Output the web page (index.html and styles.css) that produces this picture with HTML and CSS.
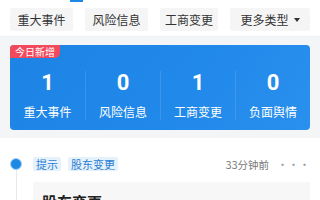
FILE: index.html
```html
<!DOCTYPE html>
<html lang="zh">
<head>
<meta charset="utf-8">
<link rel="stylesheet" href="styles.css">
</head>
<body>
<div class="top">
  <div class="indicator"></div>
  <div class="tabs">
    <div class="tab w63">重大事件</div>
    <div class="tab w63">风险信息</div>
    <div class="tab w58">工商变更</div>
    <div class="tab more">更多类型<span class="caret"></span></div>
  </div>
</div>
<div class="summary">
  <div class="card">
    <div class="badge">今日新增</div>
    <div class="stats">
      <div class="stat"><div class="num">1</div><div class="lbl">重大事件</div></div>
      <div class="stat"><div class="num">0</div><div class="lbl">风险信息</div></div>
      <div class="stat"><div class="num">1</div><div class="lbl">工商变更</div></div>
      <div class="stat"><div class="num">0</div><div class="lbl">负面舆情</div></div>
    </div>
  </div>
</div>
<div class="feed">
  <div class="item">
    <div class="rail"><div class="dot"></div><div class="line"></div></div>
    <div class="content">
      <div class="head">
        <span class="chip">提示</span>
        <span class="chip">股东变更</span>
        <span class="time">33分钟前</span>
        <span class="dots">···</span>
      </div>
      <div class="box">
        <div class="box-title">股东变更</div>
      </div>
    </div>
  </div>
</div>
</body>
</html>
```
FILE: styles.css
```css
* { box-sizing: border-box; }
html, body { margin: 0; padding: 0; background: #fff; }
body {
  width: 320px;
  height: 200px;
  overflow: hidden;
  font-family: "Noto Sans CJK SC", "Noto Sans", sans-serif;
  color: #333;
}
.top {
  background: #fff;
  height: 37px;
  border-bottom: 1px solid #eef0f2;
}
.indicator {
  width: 13px;
  height: 2px;
  margin-left: 70px;
  background: #1e88e5;
}
.tabs {
  display: flex;
  justify-content: space-between;
  padding: 6px 10px 0;
}
.tab {
  height: 23px;
  line-height: 23px;
  font-size: 12px;
  color: #333;
  background: #f5f5f6;
  border-radius: 2px;
  text-align: center;
}
.w63 { width: 63px; }
.w58 { width: 58px; }
.more {
  width: 80px;
  display: flex;
  align-items: center;
  justify-content: center;
  gap: 5px;
}
.caret {
  width: 0;
  height: 0;
  border-left: 3.5px solid transparent;
  border-right: 3.5px solid transparent;
  border-top: 4px solid #333;
}
.summary {
  background: #f4f5f7;
  padding: 8px 10px;
}
.card {
  background: linear-gradient(120deg, #1d84e6 0%, #2189ea 60%, #2a90ee 100%);
  border-radius: 4px;
  height: 85px;
  overflow: hidden;
}
.badge {
  display: block;
  width: fit-content;
  height: 13px;
  line-height: 13px;
  padding: 0 5px;
  font-size: 10px;
  color: #fff;
  background: #f2495c;
  border-bottom-right-radius: 5px;
}
.stats {
  display: grid;
  grid-template-columns: repeat(4, 1fr);
  margin-top: 13px;
}
.stat {
  text-align: center;
  color: #fff;
}
.stat + .stat { border-left: 1px solid rgba(255, 255, 255, 0.12); }
.num {
  font-family: "Roboto", "Noto Sans", sans-serif;
  font-weight: 700;
  font-size: 22px;
  line-height: 24px;
}
.lbl {
  margin-top: 9px;
  font-size: 12px;
  line-height: 16px;
}
.feed {
  padding: 19px 10px 0;
}
.item {
  display: grid;
  grid-template-columns: 12px 1fr;
  column-gap: 11px;
}
.rail {
  display: flex;
  flex-direction: column;
  align-items: center;
  padding-top: 1px;
}
.dot {
  width: 12px;
  height: 12px;
  border-radius: 50%;
  background: #1e88e5;
  border: 1.5px solid #a9d0f5;
}
.line {
  width: 1px;
  height: 40px;
  background: #e6e8eb;
}
.head {
  display: flex;
  align-items: center;
  height: 14px;
}
.chip {
  height: 14px;
  line-height: 14px;
  padding: 0 3px;
  font-size: 11px;
  color: #2a7ed4;
  background: #e5f1fb;
  border-radius: 2px;
  margin-right: 7px;
}
.time {
  margin-left: auto;
  font-size: 10.5px;
  color: #777;
}
.dots {
  margin-left: 8px;
  font-size: 11px;
  line-height: 14px;
  color: #999;
  letter-spacing: 0;
}
.box {
  margin-top: 11px;
  background: #f7f7f8;
  padding: 10px 9px;
}
.box-title {
  font-size: 15px;
  font-weight: 700;
  color: #222;
  line-height: 20px;
}
```
